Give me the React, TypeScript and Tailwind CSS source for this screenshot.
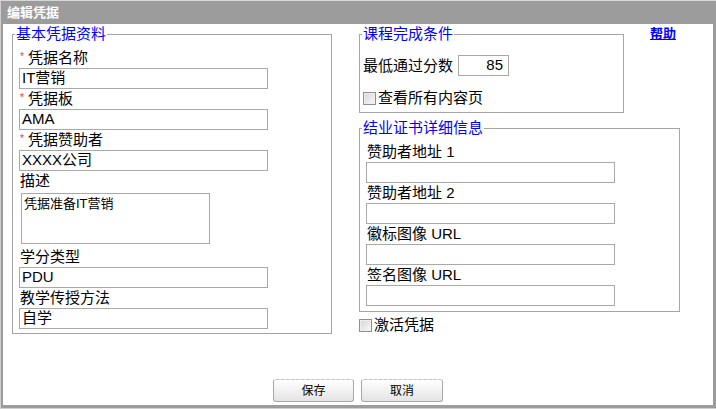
import React from "react";

function Label({ req, children }: { req?: boolean; children: React.ReactNode }) {
  return (
    <div className="h-[20px] leading-[20px] text-[15px] text-black pl-[1px] whitespace-nowrap">
      {req && <span className="inline-block w-[8px] text-[#ff3030] text-[10px] align-top relative top-[-1px]">*</span>}
      {children}
    </div>
  );
}

function TextInput({ value, w = "w-[249px]" }: { value?: string; w?: string }) {
  return (
    <input
      readOnly
      defaultValue={value ?? ""}
      className={`${w} h-[21px] block border border-[#a9a9a9] bg-white px-[2px] text-[15px] text-black outline-none`}
    />
  );
}

function Check({ label }: { label: string }) {
  return (
    <div className="h-[20px] flex items-center text-[15px] text-black">
      <span className="w-[13px] h-[13px] border border-[#8e8f8f] bg-gradient-to-br from-[#d6d6d6] to-[#f8f8f8] shadow-[inset_0_0_0_1px_#eeeeee]" />
      <span className="ml-[2px] leading-[20px]">{label}</span>
    </div>
  );
}

export default function App() {
  return (
    <div className="w-[716px] h-[409px] bg-[#9c9c9c] border-t border-t-[#d6d6d6] border-l border-l-[#cfcfcf] border-b border-b-[#d0d0d0] flex flex-col overflow-hidden font-['Liberation_Sans','Noto_Sans_CJK_SC',sans-serif]">
      <div className="h-[23px] shrink-0 pl-[6px] flex items-center text-white font-bold text-[13px]">编辑凭据</div>
      <div className="ml-[2px] mr-[3px] h-[381px] shrink-0 bg-white flex flex-col">
        <div className="flex items-start pt-[1px] pl-[9px]">
          {/* Left column */}
          <fieldset className="w-[320px] min-w-0 border border-[#a5a5a5] pl-[2px] pr-0 pt-0 pb-[4px] m-0">
            <legend className="px-[1px] text-[15px] leading-[18px] text-[#0000ff]">基本凭据资料</legend>
            <div className="pl-[4px] pt-[5px]">
              <Label req>凭据名称</Label>
              <TextInput value="IT营销" />
              <Label req>凭据板</Label>
              <TextInput value="AMA" />
              <Label req>凭据赞助者</Label>
              <TextInput value="XXXX公司" />
              <Label>描述</Label>
              <textarea
                readOnly
                defaultValue="凭据准备IT营销"
                className="block ml-[2px] mt-[2px] mb-[3px] w-[189px] h-[51px] border border-[#a9a9a9] px-[2px] pt-[2px] text-[13px] leading-[16px] text-black resize-none overflow-hidden outline-none"
              />
              <Label>学分类型</Label>
              <TextInput value="PDU" />
              <Label>教学传授方法</Label>
              <TextInput value="自学" />
            </div>
          </fieldset>

          {/* Right column */}
          <div className="ml-[27px] flex flex-col">
            <div className="flex items-start">
              <fieldset className="w-[265px] min-w-0 border border-[#a5a5a5] pl-[2px] pr-0 pt-0 pb-[4px] m-0">
                <legend className="px-[1px] text-[15px] leading-[18px] text-[#0000ff]">课程完成条件</legend>
                <div className="pl-[1px]">
                  <div className="mt-[12px] h-[21px] flex items-center">
                    <span className="text-[15px] leading-[20px] text-black whitespace-nowrap">最低通过分数</span>
                    <input
                      readOnly
                      defaultValue="85"
                      className="ml-[5px] w-[51px] h-[21px] block border border-[#a9a9a9] pr-[5px] text-right text-[15px] text-black outline-none"
                    />
                  </div>
                  <div className="mt-[12px]">
                    <Check label="查看所有内容页" />
                  </div>
                </div>
              </fieldset>
              <a href="#" className="ml-[26px] mt-[1px] text-[13px] leading-[16px] font-bold text-[#0000ff] underline whitespace-nowrap">
                帮助
              </a>
            </div>

            <fieldset className="mt-[6px] w-[321px] min-w-0 border border-[#a5a5a5] pl-[2px] pr-0 pt-0 pb-[5px] m-0">
              <legend className="px-[1px] text-[15px] leading-[18px] text-[#0000ff]">结业证书详细信息</legend>
              <div className="pl-[4px] pt-[5px]">
                <Label>赞助者地址 1</Label>
                <TextInput />
                <Label>赞助者地址 2</Label>
                <TextInput />
                <Label>徽标图像 URL</Label>
                <TextInput />
                <Label>签名图像 URL</Label>
                <TextInput />
              </div>
            </fieldset>
            <div className="mt-[3px]">
              <Check label="激活凭据" />
            </div>
          </div>
        </div>

        <div className="mt-auto pb-[3px] flex justify-center gap-[7px]">
          <button className="w-[81px] h-[23px] border border-[#a8a8a8] [border-top-style:dashed] border-t-[#c4c4c4] rounded-[3px] bg-gradient-to-b from-white to-[#e4e4e4] text-[12px] text-black">
            保存
          </button>
          <button className="w-[82px] h-[23px] border border-[#a8a8a8] [border-top-style:dashed] border-t-[#c4c4c4] rounded-[3px] bg-gradient-to-b from-white to-[#e4e4e4] text-[12px] text-black">
            取消
          </button>
        </div>
      </div>
    </div>
  );
}
